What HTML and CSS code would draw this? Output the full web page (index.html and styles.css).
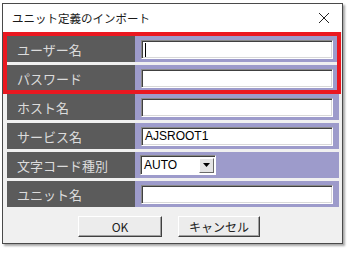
FILE: index.html
```html
<!DOCTYPE html>
<html lang="ja">
<head>
    <meta charset="UTF-8">
    <title>ユニット定義のインポート</title>
    <link rel="stylesheet" href="styles.css">
</head>
<body>
    <!-- Dialog -->
    <div class="dialog">
        <div class="titlebar">
            <span class="title">ユニット定義のインポート</span>
            <svg class="close" width="12" height="12" viewBox="0 0 12 12">
                <path d="M1 1 L11 11 M11 1 L1 11" stroke="#222" stroke-width="1" fill="none"/>
            </svg>
        </div>
        <div class="body">
            <div class="form">
                <div class="row">
                    <div class="label">ユーザー名</div>
                    <div class="field"><div class="input"><span class="caret"></span></div></div>
                </div>
                <div class="row">
                    <div class="label">パスワード</div>
                    <div class="field"><div class="input"></div></div>
                </div>
                <div class="row">
                    <div class="label">ホスト名</div>
                    <div class="field"><div class="input"></div></div>
                </div>
                <div class="row">
                    <div class="label">サービス名</div>
                    <div class="field"><div class="input">AJSROOT1</div></div>
                </div>
                <div class="row">
                    <div class="label">文字コード種別</div>
                    <div class="field">
                        <div class="select">
                            <span class="select-value">AUTO</span>
                            <span class="select-btn">
                                <svg width="7" height="4" viewBox="0 0 7 4"><path d="M0 0 H7 L3.5 4 Z" fill="#000"/></svg>
                            </span>
                        </div>
                    </div>
                </div>
                <div class="row">
                    <div class="label">ユニット名</div>
                    <div class="field"><div class="input"></div></div>
                </div>
            </div>
            <div class="buttons">
                <button class="btn ok">OK</button>
                <button class="btn">キャンセル</button>
            </div>
        </div>
    </div>

    <!-- annotation -->
    <div class="highlight"></div>
</body>
</html>
```

FILE: styles.css
```css
/* page */
body {
    margin: 0;
    background: #fff;
    font-family: "Noto Sans CJK JP", "Liberation Sans", sans-serif;
    width: 350px;
    height: 253px;
    position: relative;
    overflow: hidden;
}
.dialog {
    margin: 3px 0 0 2px;
    width: 339px;
    height: 239px;
    border: 1px solid #4a4a4a;
    box-shadow: 2px 2px 2px rgba(0, 0, 0, 0.35);
    background: #f0f0f0;
    display: flex;
    flex-direction: column;
}
.titlebar {
    height: 28px;
    background: #fff;
    display: flex;
    align-items: center;
    justify-content: space-between;
    padding: 0 12px 0 9px;
}
.title {
    font-size: 11.5px;
    color: #1a1a1a;
}
.close {
    display: block;
}
.body {
    flex: 1;
    padding: 4px 3px 0 4px;
}
.form {
    display: flex;
    flex-direction: column;
    gap: 3px;
}
.row {
    display: flex;
    height: 26px;
}
.label {
    width: 118px;
    background: #5b5b5b;
    color: #dcdcdc;
    font-size: 13px;
    padding-left: 10px;
    display: flex;
    align-items: center;
}
.field {
    flex: 1;
    background: #9d9bcb;
    display: flex;
    align-items: center;
    padding: 0 6px;
}
.input {
    flex: 1;
    height: 17px;
    background: #fff;
    border: 1px solid;
    border-color: #8a8a8a #fff #fff #8a8a8a;
    box-shadow: inset 1px 1px 0 #404040, inset -1px -1px 0 #d8d8d8;
    font-family: "Liberation Sans", sans-serif;
    font-size: 12px;
    line-height: 17px;
    padding-left: 3px;
    position: relative;
}
.caret {
    position: absolute;
    left: 3px;
    top: 2px;
    width: 1px;
    height: 14px;
    background: #000;
}
.select {
    width: 70px;
    height: 16px;
    background: #fff;
    border: 1px solid;
    border-color: #8a8a8a #fff #fff #8a8a8a;
    box-shadow: inset 1px 1px 0 #404040;
    display: flex;
    align-items: center;
    justify-content: space-between;
    padding: 1px 1px 1px 3px;
    margin-left: -1px;
}
.select-value {
    font-family: "Liberation Sans", sans-serif;
    font-size: 12px;
}
.select-btn {
    width: 15px;
    height: 15px;
    background: #e4e4e4;
    border: 1px solid;
    border-color: #fff #6a6a6a #6a6a6a #fff;
    box-sizing: border-box;
    display: flex;
    align-items: center;
    justify-content: center;
}
.buttons {
    display: flex;
    justify-content: center;
    gap: 16px;
    margin-top: 9px;
    padding-right: 8px;
}
.btn {
    width: 82px;
    height: 21px;
    background: #ececec;
    border: 1px solid;
    border-color: #fff #404040 #404040 #fff;
    box-shadow: inset -1px -1px 0 #a0a0a0;
    font-family: "Noto Sans CJK JP", "Liberation Sans", sans-serif;
    font-size: 12px;
    color: #222;
    padding: 0;
}
.ok {
    width: 84px;
}
.highlight {
    position: absolute;
    left: 3px;
    top: 32px;
    width: 330px;
    height: 54px;
    border: 4px solid #ea1820;
}
```
